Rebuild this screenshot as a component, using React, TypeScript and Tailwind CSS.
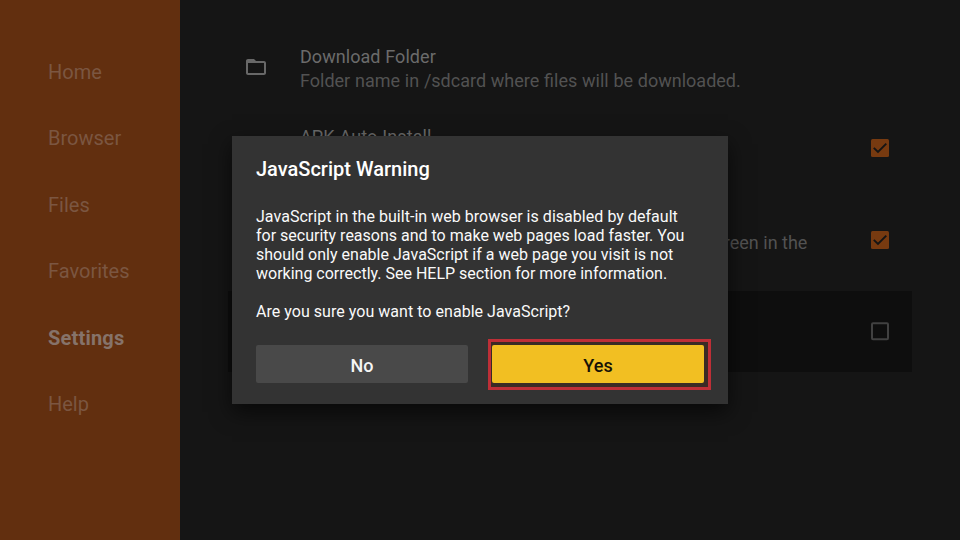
import type { ReactNode } from "react";

const navItems = ["Home", "Browser", "Files", "Favorites", "Settings", "Help"];

function FolderIcon() {
  return (
    <svg className="-mt-px" width="24" height="24" viewBox="0 0 24 24" fill="#686868">
      <path d="M20 6h-8l-2-2H4c-1.100 0-1.990.9-1.990 2L2 18c0 1.100.9 2 2 2h16c1.100 0 2-.9 2-2V8c0-1.100-.9-2-2-2zm0 12H4V8h16v10z" />
    </svg>
  );
}

function Checkbox({ checked }: { checked: boolean }) {
  return checked ? (
    <svg className="-mt-px" width="24" height="24" viewBox="0 0 24 24">
      <rect x="3" y="3" width="18" height="18" rx="1.500" fill="#773a10" />
      <path d="M5.800 11.800L10 16L18.300 7.700" fill="none" stroke="#141414" strokeWidth="1.900" />
    </svg>
  ) : (
    <svg className="-mt-px" width="24" height="24" viewBox="0 0 24 24">
      <rect x="4" y="4.300" width="16" height="16" rx="1" fill="none" stroke="#414141" strokeWidth="2" />
    </svg>
  );
}

function Row({
  icon,
  end,
  className,
  children,
}: {
  icon?: ReactNode;
  end?: ReactNode;
  className: string;
  children?: ReactNode;
}) {
  return (
    <div className={`flex items-center pl-4 pr-5 ${className}`}>
      <div className="mr-8 w-6 shrink-0">{icon}</div>
      <div className="flex-1 text-[18px] leading-[21px] text-[#525252] [word-spacing:0.3px]">{children}</div>
      {end}
    </div>
  );
}

export default function App() {
  return (
    <div className="relative flex h-[540px] w-[960px] overflow-hidden bg-[#151515] font-['Roboto',sans-serif]">
      <nav className="flex w-[180px] flex-col bg-[#622f0f] pt-[38.6px] pl-12">
        {navItems.map((item) => (
          <a
            key={item}
            className={`flex h-[66.5px] items-center text-[20px] ${
              item === "Settings" ? "font-bold tracking-[0.2px] text-[#86736a]" : "text-[#7b5641]"
            }`}
          >
            {item}
          </a>
        ))}
      </nav>

      <main className="flex flex-1 flex-col pt-[27px] pr-12 pl-12">
        <Row className="h-[81px]" icon={<FolderIcon />}>
          <div className="mt-px mb-[3px] tracking-[0.045px] text-[#6b6b6b]">Download Folder</div>
          <div>Folder name in /sdcard where files will be downloaded.</div>
        </Row>
        <Row className="h-[81px]" end={<Checkbox checked />}>
          <div className="mb-[24px] tracking-[0.09px] text-[#6b6b6b]">APK Auto Install</div>
        </Row>
        <Row className="h-[102px]" end={<Checkbox checked />}>
          <div className="mt-1 pr-[60.600px] text-right [word-spacing:0px]">screen in the</div>
        </Row>
        <Row className="h-[81px] bg-[#0e0e0e]" end={<Checkbox checked={false} />} />
      </main>

      <div className="absolute inset-0 flex items-center justify-center">
        <section className="flex h-[268px] w-[496px] flex-col bg-[#333333] px-6 pt-[21px] shadow-[0_8px_20px_rgba(0,0,0,0.6)]">
          <h1 className="text-[20px] leading-6 font-medium text-white">JavaScript Warning</h1>
          <div className="mt-[26px] text-[16px] leading-[19px] text-[#fafafa]">
            <p>
              <span className="tracking-[0.035px]">JavaScript in the built-in web browser is disabled by default</span>
              <br />
              for security reasons and to make web pages load faster. You
              <br />
              <span className="tracking-[0.02px]">should only enable JavaScript if a web page you visit is not</span>
              <br />
              working correctly. See HELP section for more information.
            </p>
            <p className="mt-[19px] tracking-[0.035px]">Are you sure you want to enable JavaScript?</p>
          </div>
          <div className="mt-[18px] flex items-start gap-5">
            <button className="mt-[6.400px] h-[38px] w-[212px] shrink-0 rounded-[2px] bg-[#494949] pt-[2px] text-[18px] font-medium text-[#f5f5f5]">
              No
            </button>
            <div className="h-[51px] w-[223px] shrink-0 border-3 border-[#be2f37] bg-[#3b2b25] pt-[3.400px] pl-px">
              <button className="block h-[38px] w-[212px] rounded-[2px] bg-[#f2bf22] pt-[2px] text-[18px] font-medium text-[#171207]">
                Yes
              </button>
            </div>
          </div>
        </section>
      </div>
    </div>
  );
}
